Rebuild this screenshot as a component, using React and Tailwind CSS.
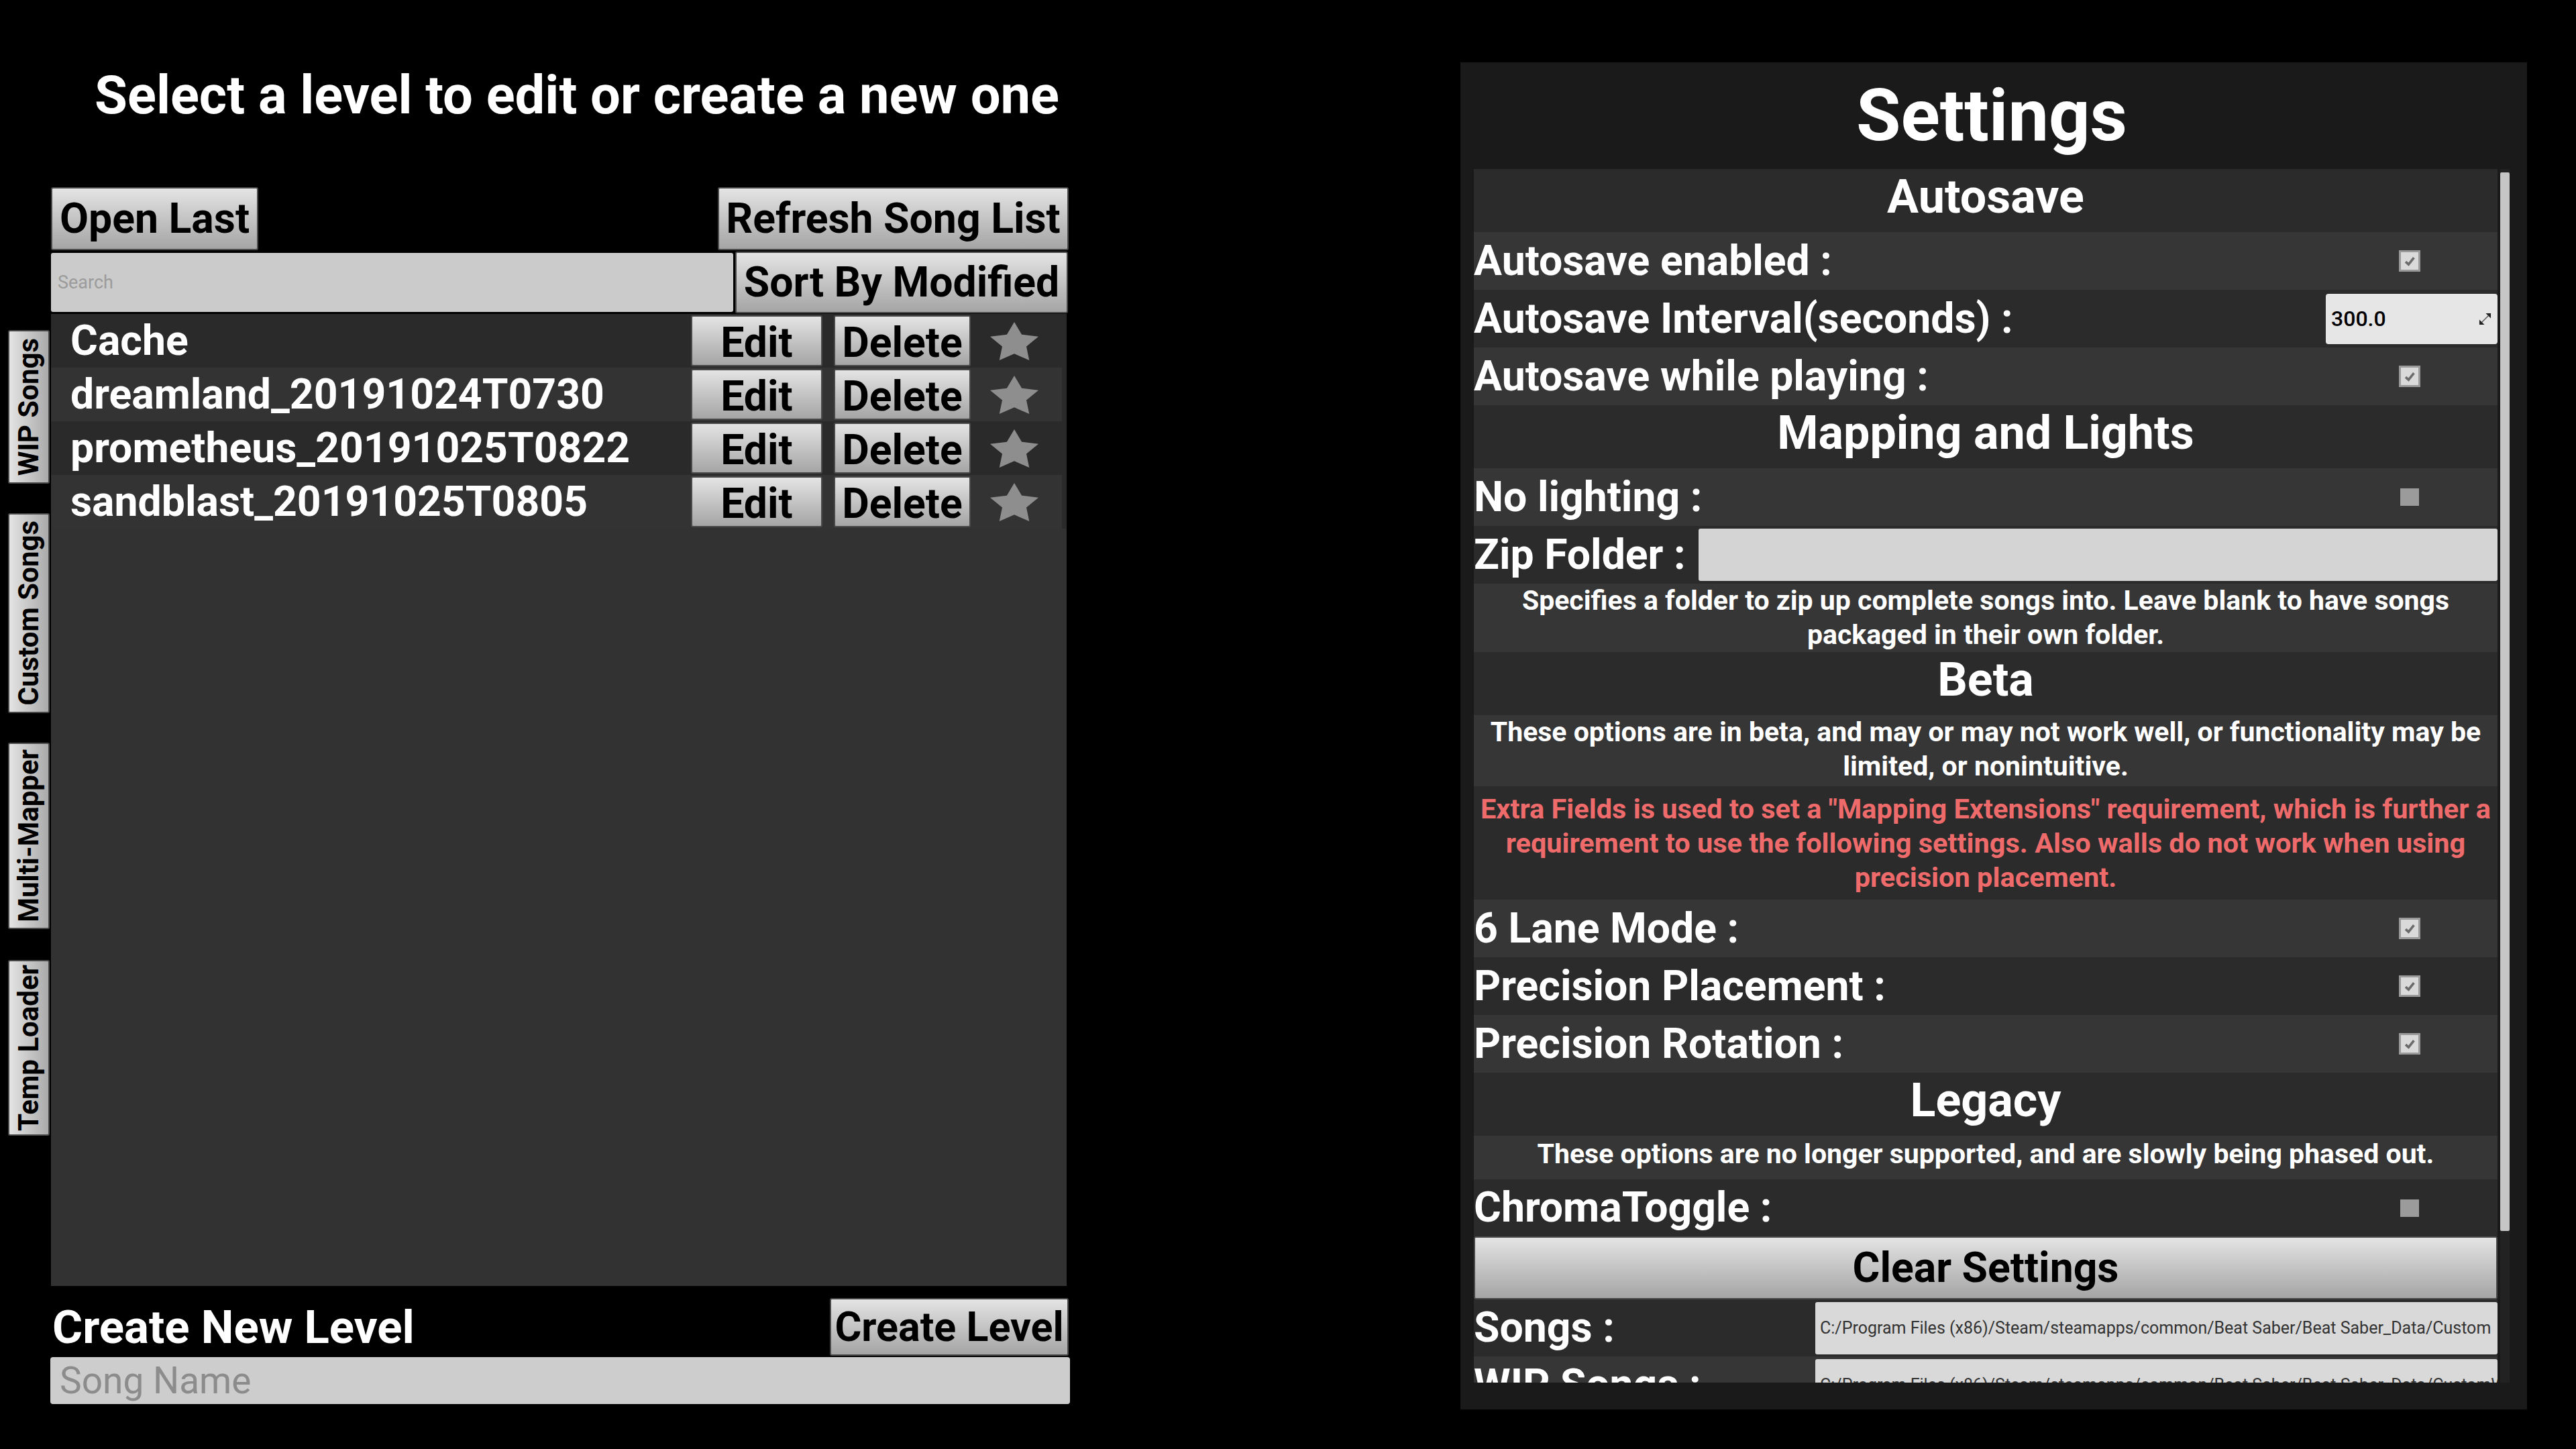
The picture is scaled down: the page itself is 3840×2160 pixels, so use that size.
import React from "react";

function Btn({ children, className = "" }) {
  return (
    <div
      className={`flex items-center justify-center rounded-[3px] border-2 border-[#4a4a4a] bg-linear-to-b from-[#e4e4e4] to-[#a5a5a5] text-black font-bold leading-none whitespace-nowrap ${className}`}
    >
      {children}
    </div>
  );
}

function Star({ className = "" }) {
  return (
    <svg viewBox="2 2 20 19.02" preserveAspectRatio="none" className={`w-[72px] h-[57px] ${className}`}>
      <polygon
        points="12,2 15.09,8.26 22,9.27 17,14.14 18.18,21.02 12,17.77 5.82,21.02 7,14.14 2,9.27 8.91,8.26"
        fill="#8e8e8e"
      />
    </svg>
  );
}

function Checked() {
  return (
    <div className="w-[32px] h-[32px] bg-[#dadada] border-[3px] border-[#9a9a9a] flex items-center justify-center">
      <svg viewBox="0 0 10 10" className="w-[20px] h-[20px]">
        <path d="M2 5.6 L4.2 7.6 L8.2 2.6" stroke="#6b6b6b" strokeWidth="1.8" fill="none" />
      </svg>
    </div>
  );
}

function Unchecked() {
  return <div className="w-[28px] h-[26px] bg-[#9b9b9b] mx-[2px]" />;
}

const DARK = "bg-[#2b2b2b]";
const LIGHT = "bg-[#363636]";

function Header({ children, cls, h = "h-[94px]" }) {
  return (
    <div
      className={`${cls} ${h} shrink-0 flex items-center justify-center pb-[12px] text-[70px] font-bold leading-none text-white`}
    >
      {children}
    </div>
  );
}

function Row({ label, cls, children, h = "h-[86px]" }) {
  return (
    <div className={`${cls} ${h} shrink-0 flex items-center`}>
      <span className="text-[62.5px] font-bold leading-none whitespace-nowrap text-white">{label}</span>
      {children}
    </div>
  );
}

function CheckRow({ label, cls, checked }) {
  return (
    <Row label={label} cls={cls}>
      <div className="ml-auto mr-[115px]">{checked ? <Checked /> : <Unchecked />}</div>
    </Row>
  );
}

function Desc({ lines, cls, h, color = "text-white", size = "text-[41px]", pad = "" }) {
  return (
    <div
      className={`${cls} ${h} ${pad} shrink-0 flex flex-col items-center justify-center ${size} leading-[51px] font-bold ${color} text-center`}
    >
      {lines.map((l, i) => (
        <div key={i} className="whitespace-nowrap">
          {l}
        </div>
      ))}
    </div>
  );
}

const PATH = "C:/Program Files (x86)/Steam/steamapps/common/Beat Saber/Beat Saber_Data/Custom";

export default function App() {
  const songs = [
    "Cache",
    "dreamland_20191024T0730",
    "prometheus_20191025T0822",
    "sandblast_20191025T0805",
  ];
  const tabs = [
    ["WIP Songs", "h-[229px]"],
    ["Custom Songs", "h-[298px] mt-[44px]"],
    ["Multi-Mapper", "h-[278px] mt-[44px]"],
    ["Temp Loader", "h-[262px] mt-[46px]"],
  ];

  return (
    <div className="w-[3840px] h-[2160px] bg-black flex overflow-hidden [font-family:Roboto,sans-serif]">
      {/* Vertical tabs */}
      <div className="ml-[12px] mt-[492px] flex flex-col w-[62px] shrink-0">
        {tabs.map(([t, cls]) => (
          <div
            key={t}
            className={`${cls} flex items-center justify-center rounded-[3px] border-2 border-[#4a4a4a] bg-linear-to-r from-[#e4e4e4] to-[#aaaaaa]`}
          >
            <span className="[writing-mode:vertical-rl] rotate-180 text-[42px] font-bold leading-none text-black whitespace-nowrap">
              {t}
            </span>
          </div>
        ))}
      </div>

      {/* Left column */}
      <div className="ml-[2px] w-[1519px] shrink-0 flex flex-col">
        <div className="mt-[102px] ml-[65px] h-[80px] text-[79.5px] leading-none font-bold text-white whitespace-nowrap">
          Select a level to edit or create a new one
        </div>
        <div className="mt-[97px] flex justify-between w-[1517px]">
          <Btn className="w-[309px] h-[94px] text-[62.5px]">Open Last</Btn>
          <Btn className="w-[523px] h-[94px] text-[62.5px]">Refresh Song List</Btn>
        </div>
        <div className="mt-[2px] flex items-center w-[1517px] h-[92px]">
          <div className="w-[1017px] h-[88px] bg-[#cbcbcb] rounded-[3px] flex items-center pl-[10px] text-[27px] text-[#9b9b9b]">
            Search
          </div>
          <Btn className="ml-[3px] w-[496px] h-[92px] text-[62.5px]">Sort By Modified</Btn>
        </div>
        <div className="mt-[1px] w-[1514px] h-[1449px] bg-[#323232] flex items-start">
          <div className="flex-1 flex flex-col">
            {songs.map((s, i) => (
              <div
                key={s}
                className={`h-[80px] flex items-center ${i % 2 ? "bg-[#333333]" : "bg-[#2a2a2a]"}`}
              >
                <span className="ml-[29px] flex-1 text-[62.5px] font-bold leading-none text-white whitespace-nowrap">
                  {s}
                </span>
                <Btn className="w-[196px] h-[76px] text-[62.5px] pt-[6px]">Edit</Btn>
                <Btn className="ml-[17px] w-[204px] h-[76px] text-[62.5px] pt-[6px]">Delete</Btn>
                <Star className="ml-[29px] mr-[35px]" />
              </div>
            ))}
          </div>
          <div className="w-[7px] h-[320px] bg-[#2a2a2a]" />
        </div>
        <div className="mt-[18px] flex items-center justify-between h-[86px] w-[1517px]">
          <span className="ml-[2px] text-[69px] font-bold leading-none text-white whitespace-nowrap">
            Create New Level
          </span>
          <Btn className="w-[356px] h-[86px] text-[61px]">Create Level</Btn>
        </div>
        <div className="mt-[2px] -ml-[1px] h-[70px] w-[1520px] bg-[#cdcdcd] rounded-[4px] flex items-center pl-[14px] text-[55px] leading-none text-[#8c8c8c]">
          Song Name
        </div>
      </div>

      {/* Settings panel */}
      <div className="ml-[582px] mt-[93px] w-[1590px] h-[2008px] shrink-0 bg-[#1a1a1a] flex flex-col pl-[20px] pr-[26px]">
        <div className="mt-[25px] h-[108px] text-[108px] leading-none font-bold text-white text-center">
          Settings
        </div>
        <div className="mt-[26px] h-[1809px] flex">
          <div className="w-[1526px] h-full overflow-hidden flex flex-col">
            <Header cls={DARK}>Autosave</Header>
            <CheckRow label="Autosave enabled :" cls={LIGHT} checked />
            <Row label="Autosave Interval(seconds) :" cls={DARK}>
              <div className="ml-auto w-[256px] h-[75px] bg-[#e6e6e6] rounded-[4px] flex items-center justify-between pl-[8px] pr-[9px]">
                <span className="text-[32px] leading-none font-medium text-black">300.0</span>
                <svg viewBox="0 0 20 20" className="w-[19px] h-[19px]">
                  <polygon points="11,1 19,1 19,9" fill="#222" />
                  <polygon points="1,11 1,19 9,19" fill="#222" />
                  <line x1="15" y1="5" x2="5" y2="15" stroke="#555" strokeWidth="1.5" />
                </svg>
              </div>
            </Row>
            <CheckRow label="Autosave while playing :" cls={LIGHT} checked />
            <Header cls={DARK}>Mapping and Lights</Header>
            <CheckRow label="No lighting :" cls={LIGHT} />
            <Row label="Zip Folder :" cls={DARK}>
              <div className="ml-auto w-[1191px] h-[78px] bg-[#d4d4d4] rounded-[3px]" />
            </Row>
            <Desc
              cls={LIGHT}
              h="h-[102px]"
              lines={[
                "Specifies a folder to zip up complete songs into. Leave blank to have songs",
                "packaged in their own folder.",
              ]}
            />
            <Header cls={DARK}>Beta</Header>
            <Desc
              cls={LIGHT}
              h="h-[106px]"
              pad="pb-[4px]"
              lines={[
                "These options are in beta, and may or may not work well, or functionality may be",
                "limited, or nonintuitive.",
              ]}
            />
            <Desc
              cls={DARK}
              h="h-[169px]"
              color="text-[#ef6b6b]"
              size="text-[41.5px]"
              lines={[
                'Extra Fields is used to set a "Mapping Extensions" requirement, which is further a',
                "requirement to use the following settings. Also walls do not work when using",
                "precision placement.",
              ]}
            />
            <CheckRow label="6 Lane Mode :" cls={LIGHT} checked />
            <CheckRow label="Precision Placement :" cls={DARK} checked />
            <CheckRow label="Precision Rotation :" cls={LIGHT} checked />
            <Header cls={DARK}>Legacy</Header>
            <Desc
              cls={LIGHT}
              h="h-[65px]"
              pad="pb-[10px]"
              lines={["These options are no longer supported, and are slowly being phased out."]}
            />
            <Row label="ChromaToggle :" cls={DARK} h="h-[85px]">
              <div className="ml-auto mr-[115px]">
                <Unchecked />
              </div>
            </Row>
            <Btn className="h-[94px] shrink-0 w-full text-[62.5px]">Clear Settings</Btn>
            <Row label="Songs :" cls={DARK} h="h-[85px]">
              <div className="ml-auto w-[1017px] h-[78px] bg-[#d9d9d9] rounded-[3px] flex items-center pl-[7px] overflow-hidden whitespace-nowrap text-[25px] leading-none text-[#333333]">
                {PATH}
              </div>
            </Row>
            <Row label="WIP Songs :" cls={LIGHT} h="h-[85px]">
              <div className="ml-auto w-[1017px] h-[78px] bg-[#d9d9d9] rounded-[3px] flex items-center pl-[7px] overflow-hidden whitespace-nowrap text-[25px] leading-none text-[#333333]">
                {PATH}WIPLevels
              </div>
            </Row>
          </div>
          <div className="ml-[4px] w-[14px] h-full bg-[#222222] flex flex-col">
            <div className="mt-[5px] h-[1578px] bg-[#c6c6c6] rounded-[2px]" />
          </div>
        </div>
      </div>
    </div>
  );
}
